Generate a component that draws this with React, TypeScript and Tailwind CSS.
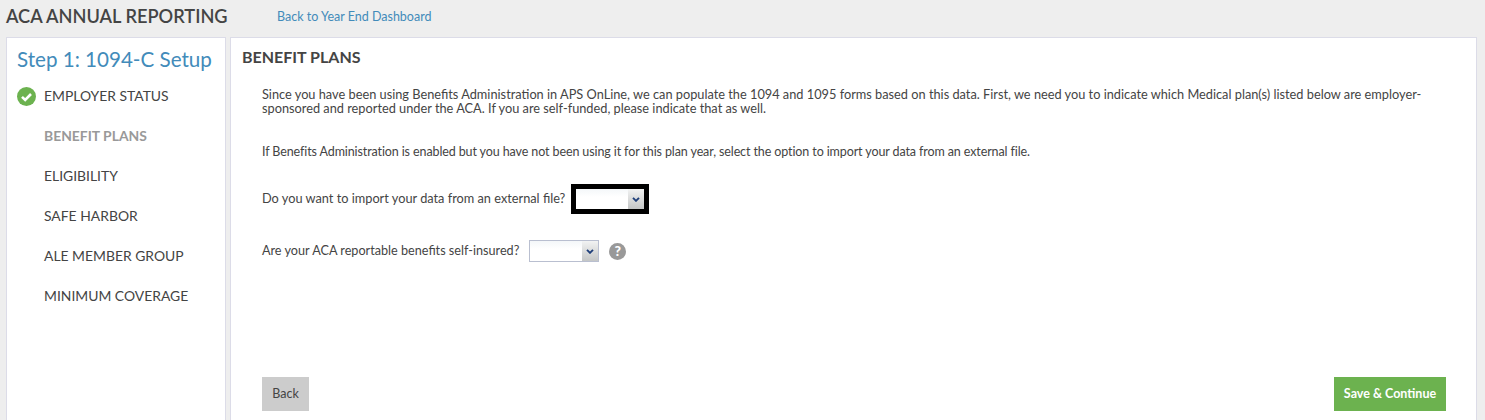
const STEPS = ['EMPLOYER STATUS', 'BENEFIT PLANS', 'ELIGIBILITY', 'SAFE HARBOR', 'ALE MEMBER GROUP', 'MINIMUM COVERAGE']

function CheckIcon() {
  return (
    <svg width="19" height="19" viewBox="0 0 19 19" className="absolute left-0 top-[3px]">
      <circle cx="9.5" cy="9.5" r="9.5" fill="#6cb24f" />
      <path d="M5 9.8l3.2 3.2L14 7" fill="none" stroke="#fff" strokeWidth="2.6" />
    </svg>
  )
}

function Select({ className }: { className: string }) {
  return (
    <div className={`flex bg-linear-to-b from-[#f4f7f9] to-white to-40% ${className}`}>
      <div className="flex-1" />
      <div className="flex w-[16px] items-center justify-center bg-linear-to-b from-[#f2f3f3] to-[#c4c6c6]">
        <svg width="8" height="5" viewBox="0 0 8 5">
          <path d="M1 .8l3 3 3-3" fill="none" stroke="#1f3f7a" strokeWidth="1.9" />
        </svg>
      </div>
    </div>
  )
}

export default function App() {
  return (
    <div className="h-[420px] overflow-hidden bg-[#eeeeee] font-['Lato',sans-serif] text-[#444444]">
      <header className="flex h-[37px] items-center pb-[4px] pl-[6px]">
        <h1 className="w-[271px] text-[18.2px] font-semibold text-[#444444]">ACA ANNUAL REPORTING</h1>
        <a className="pt-[2px] text-[12.5px] text-[#428bba]">Back to Year End Dashboard</a>
      </header>

      <div className="flex h-[383px] gap-[4px] pl-[6px] pr-[8px]">
        <aside className="w-[220px] border border-b-0 border-[#dcdce8] bg-white pl-[10px] pt-[6px]">
          <h2 className="text-[20.6px] leading-[30px] text-[#428bba]">Step 1: 1094-C Setup</h2>
          <ul className="mt-[10px]">
            {STEPS.map((step, i) => (
              <li
                key={step}
                className={`relative h-[40px] pl-[27px] pt-[2px] text-[13.9px] leading-[20px] ${i === 1 ? 'font-bold text-[#999999]' : 'text-[#444444]'}`}
              >
                {i === 0 && <CheckIcon />}
                {step}
              </li>
            ))}
          </ul>
        </aside>

        <main className="relative flex-1 border border-b-0 border-[#dcdce8] bg-white pl-[11px] pt-[7px]">
          <h2 className="text-[16px] font-bold leading-[24px] text-[#444444]">BENEFIT PLANS</h2>
          <div className="pl-[20px] pr-[40px] pt-[18px] leading-[14px]">
            <p className="text-[12.77px]">
              Since you have been using Benefits Administration in APS OnLine, we can populate the 1094 and 1095 forms based on this data. First, we need you to indicate which Medical plan(s) listed below are employer-sponsored and reported under the ACA. If you are self-funded, please indicate that as well.
            </p>
            <p className="mt-[30px] text-[12.5px] tracking-[-0.107px]">
              If Benefits Administration is enabled but you have not been using it for this plan year, select the option to import your data from an external file.
            </p>
            <div className="mt-[25px] flex items-center gap-[6px]">
              <span className="pb-[2px] text-[12.75px]">Do you want to import your data from an external file?</span>
              <div className="border-[5px] border-black">
                <Select className="h-[20px] w-[68px]" />
              </div>
            </div>
            <div className="mt-[26px] flex items-center gap-[10px]">
              <span className="text-[12.65px]">Are your ACA reportable benefits self-insured?</span>
              <Select className="h-[22px] w-[70px] border border-[#b9bfd0]" />
              <span className="flex h-[17px] w-[17px] items-center justify-center rounded-full bg-[#999999] text-[14px] font-black text-white">?</span>
            </div>
          </div>

          <div className="absolute bottom-[9px] left-[31px] right-[30px] flex justify-between">
            <button className="h-[34px] w-[47px] bg-[#cccccc] text-[12.5px] text-[#444444]">Back</button>
            <button className="h-[34px] w-[112px] bg-[#6cb24f] text-[12.5px] font-bold text-white">Save &amp; Continue</button>
          </div>
        </main>
      </div>
    </div>
  )
}
